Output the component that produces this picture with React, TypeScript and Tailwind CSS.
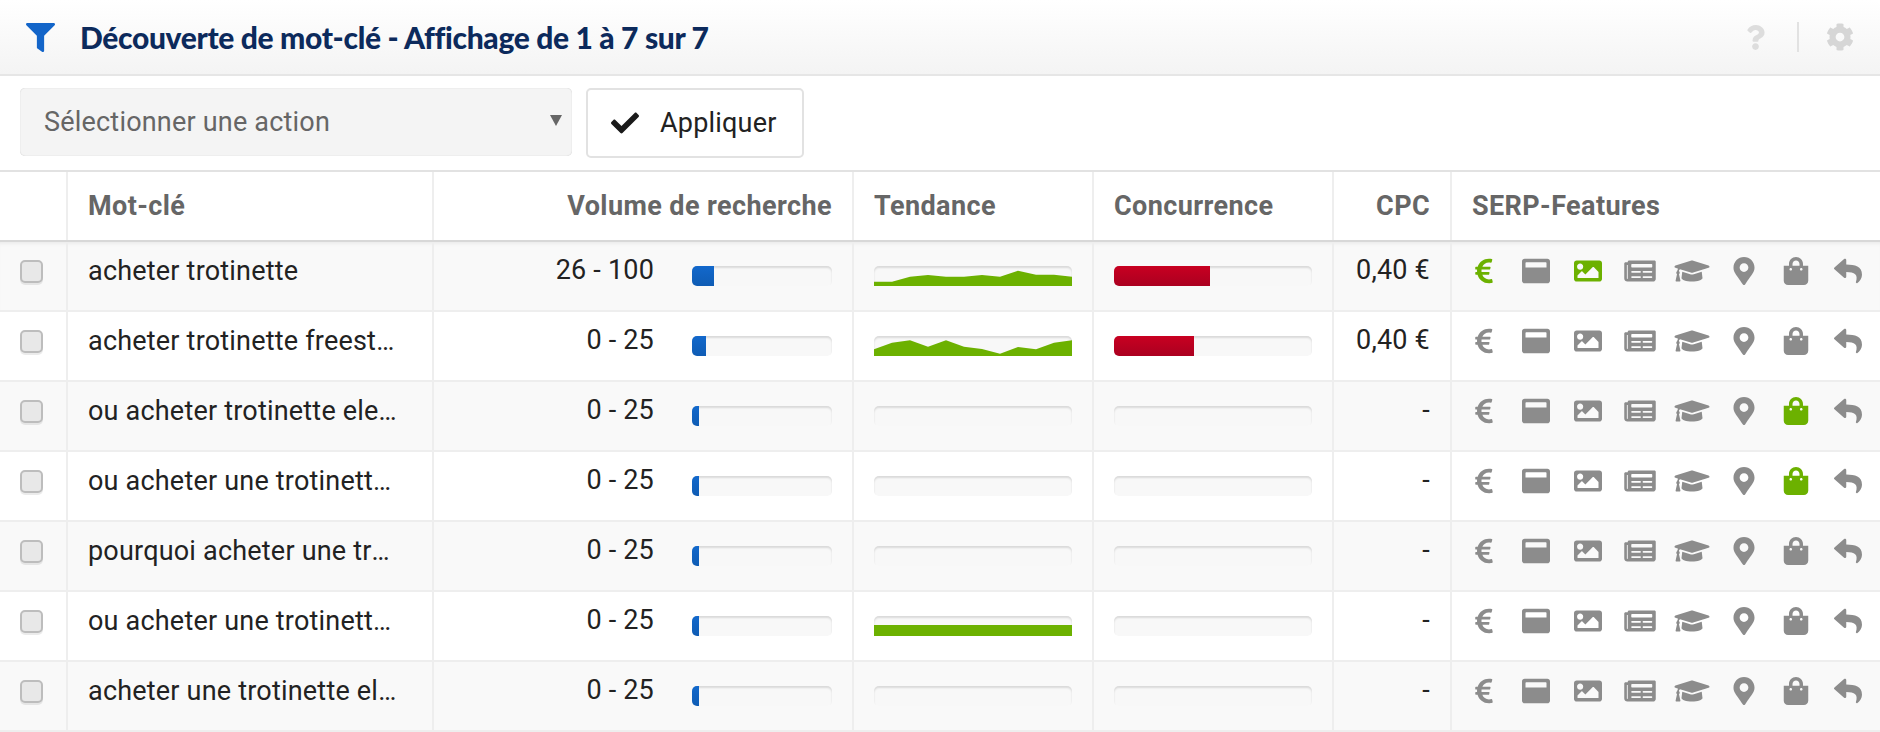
import React from "react";
import {
  FaCheck,
  FaCog,
  FaEuroSign,
  FaFilter,
  FaGraduationCap,
  FaImage,
  FaMapMarkerAlt,
  FaNewspaper,
  FaQuestion,
  FaReply,
  FaShoppingBag,
  FaWindowMaximize,
} from "react-icons/fa";

interface Row {
  keyword: string;
  volume: string;
  volumeWidth: number;
  trend: number[] | null;
  competition: number;
  cpc: string;
  active: number[];
}

const rows: Row[] = [
  {
    keyword: "acheter trotinette",
    volume: "26 - 100",
    volumeWidth: 22,
    trend: [15.7, 15.7, 10.7, 9, 10.7, 10.7, 9, 10.7, 4.7, 8.7, 8.7, 10.7],
    competition: 96,
    cpc: "0,40 €",
    active: [0, 2],
  },
  {
    keyword: "acheter trotinette freestyle",
    volume: "0 - 25",
    volumeWidth: 14,
    trend: [13.3, 6.7, 4.3, 10.7, 4.3, 10.7, 13, 17.7, 11, 13.3, 6.7, 4.3],
    competition: 80,
    cpc: "0,40 €",
    active: [],
  },
  {
    keyword: "ou acheter trotinette electrique",
    volume: "0 - 25",
    volumeWidth: 7,
    trend: null,
    competition: 0,
    cpc: "-",
    active: [6],
  },
  {
    keyword: "ou acheter une trotinette electrique",
    volume: "0 - 25",
    volumeWidth: 7,
    trend: null,
    competition: 0,
    cpc: "-",
    active: [6],
  },
  {
    keyword: "pourquoi acheter une trotinette",
    volume: "0 - 25",
    volumeWidth: 7,
    trend: null,
    competition: 0,
    cpc: "-",
    active: [],
  },
  {
    keyword: "ou acheter une trotinette freestyle",
    volume: "0 - 25",
    volumeWidth: 7,
    trend: [9, 9, 9, 9, 9, 9, 9, 9, 9, 9, 9, 9],
    competition: 0,
    cpc: "-",
    active: [],
  },
  {
    keyword: "acheter une trotinette electrique",
    volume: "0 - 25",
    volumeWidth: 7,
    trend: null,
    competition: 0,
    cpc: "-",
    active: [],
  },
];

const features = [FaEuroSign, FaWindowMaximize, FaImage, FaNewspaper, FaGraduationCap, FaMapMarkerAlt, FaShoppingBag, FaReply];

const gridCols = "grid grid-cols-[68px_366px_420px_240px_240px_118px_1fr]";
const cellLine = "border-r-2 border-[#eeeeee]";

function Track({ children }: { children?: React.ReactNode }) {
  return (
    <div className="relative h-5 rounded-[5px] bg-[#f8f8f8] shadow-[inset_0_2px_2px_rgba(0,0,0,0.12)]">
      {children}
    </div>
  );
}

function Sparkline({ points }: { points: number[] }) {
  const line = points.map((y, i) => `${i * 18},${y}`).join(" ");
  return (
    <svg className="absolute inset-0 h-5 w-full" viewBox="0 0 198 20" preserveAspectRatio="none">
      <polygon points={`0,20 ${line} 198,20`} fill="#6cb100" />
    </svg>
  );
}

export default function App() {
  return (
    <div className="h-[732px] w-[1880px] overflow-hidden bg-white font-['Roboto',sans-serif] text-[27px] text-[#222222]">
      <div className="flex h-[76px] items-center rounded-tr-[8px] border-b-2 border-[#e6e6e6] bg-gradient-to-b from-white to-[#f4f4f4] pl-[26px] pr-[26px]">
        <FaFilter className="h-[29px] w-[29px] text-[#1365c9]" />
        <h1 className="ml-[25px] font-['Lato',sans-serif] text-[30px] font-black tracking-[-0.35px] text-[#0c2a5c]">
          Découverte de mot-clé - Affichage de 1 à 7 sur 7
        </h1>
        <div className="ml-auto flex items-center">
          <FaQuestion className="h-[25px] w-[19px] text-[#dddddd]" />
          <div className="ml-[32px] h-[30px] w-0.5 bg-[#e2e2e2]" />
          <FaCog className="ml-[27px] h-[28px] w-[28px] text-[#d6d6d6]" />
        </div>
      </div>

      <div className="flex h-[94px] items-start gap-[14px] pl-[20px] pt-[12px]">
        <div className="relative flex h-[68px] w-[552px] items-center rounded-[5px] bg-[#f4f4f4] pl-[24px] tracking-[0.2px] text-[#666666] shadow-[inset_0_0_1px_rgba(0,0,0,0.25)]">
          Sélectionner une action
          <span className="absolute right-[10px] top-[27px] h-0 w-0 border-x-[6px] border-t-[11px] border-x-transparent border-t-[#666666]" />
        </div>
        <button className="flex h-[70px] w-[218px] items-center rounded-[5px] border-2 border-[#e2e2e2] bg-white pl-[23px] tracking-[0.2px] text-[#222222]">
          <FaCheck className="h-[28px] w-[28px] text-[#1a1a1a]" />
          <span className="ml-[21px]">Appliquer</span>
        </button>
      </div>

      <div className={`${gridCols} h-[72px] border-y-2 border-t-[#e2e2e2] border-b-[#d8d8d8] font-bold tracking-[0.4px] text-[#666666]`}>
        <div className={cellLine} />
        <div className={`${cellLine} flex items-center pl-[20px]`}>Mot-clé</div>
        <div className={`${cellLine} flex items-center justify-end pr-[20px]`}>Volume de recherche</div>
        <div className={`${cellLine} flex items-center pl-[20px]`}>Tendance</div>
        <div className={`${cellLine} flex items-center pl-[20px]`}>Concurrence</div>
        <div className={`${cellLine} flex items-center justify-end pr-[20px]`}>CPC</div>
        <div className="flex items-center pl-[20px]">SERP-Features</div>
      </div>

      {rows.map((row, i) => (
        <div
          key={row.keyword}
          className={`${gridCols} h-[70px] border-b-2 border-[#eeeeee] tracking-[0.2px] ${i % 2 === 0 ? "bg-[#f9f9f9]" : "bg-white"} ${i === 0 ? "shadow-[inset_0_4px_4px_-3px_rgba(0,0,0,0.08)]" : ""}`}
        >
          <div className={`${cellLine} flex items-start pl-[20px] pt-[18px]`}>
            <span className="h-[23px] w-[23px] rounded-[5px] border-2 border-[#bdbdbd] bg-[#e8e8e8] shadow-[0_2px_0_rgba(0,0,0,0.08)]" />
          </div>
          <div className={`${cellLine} flex items-start pl-[20px] pr-[30px] pt-[9px]`}>
            <span className="truncate">{row.keyword}</span>
          </div>
          <div className={`${cellLine} flex items-start pt-[8px]`}>
            <span className="w-[220px] text-right">{row.volume}</span>
            <div className="ml-[38px] mt-[16px] w-[140px]">
              <Track>
                <div
                  className="h-5 rounded-l-[5px] bg-gradient-to-b from-[#1268cc] to-[#0f5cb4]"
                  style={{ width: row.volumeWidth }}
                />
              </Track>
            </div>
          </div>
          <div className={`${cellLine} px-[20px] pt-[24px]`}>
            <Track>{row.trend && <Sparkline points={row.trend} />}</Track>
          </div>
          <div className={`${cellLine} px-[20px] pt-[24px]`}>
            <Track>
              {row.competition > 0 && (
                <div
                  className="h-5 rounded-l-[5px] bg-gradient-to-b from-[#c80021] to-[#ab0020]"
                  style={{ width: row.competition }}
                />
              )}
            </Track>
          </div>
          <div className={`${cellLine} pr-[20px] pt-[8px] text-right`}>{row.cpc}</div>
          <div className="ml-[6px] grid w-[416px] grid-cols-8 items-start pt-[15px]">
            {features.map((Icon, f) => (
              <Icon
                key={f}
                className={`mx-auto h-[28px] w-[36px] ${row.active.includes(f) ? "text-[#6cb100]" : "text-[#8c8c8c]"}`}
              />
            ))}
          </div>
        </div>
      ))}
    </div>
  );
}
